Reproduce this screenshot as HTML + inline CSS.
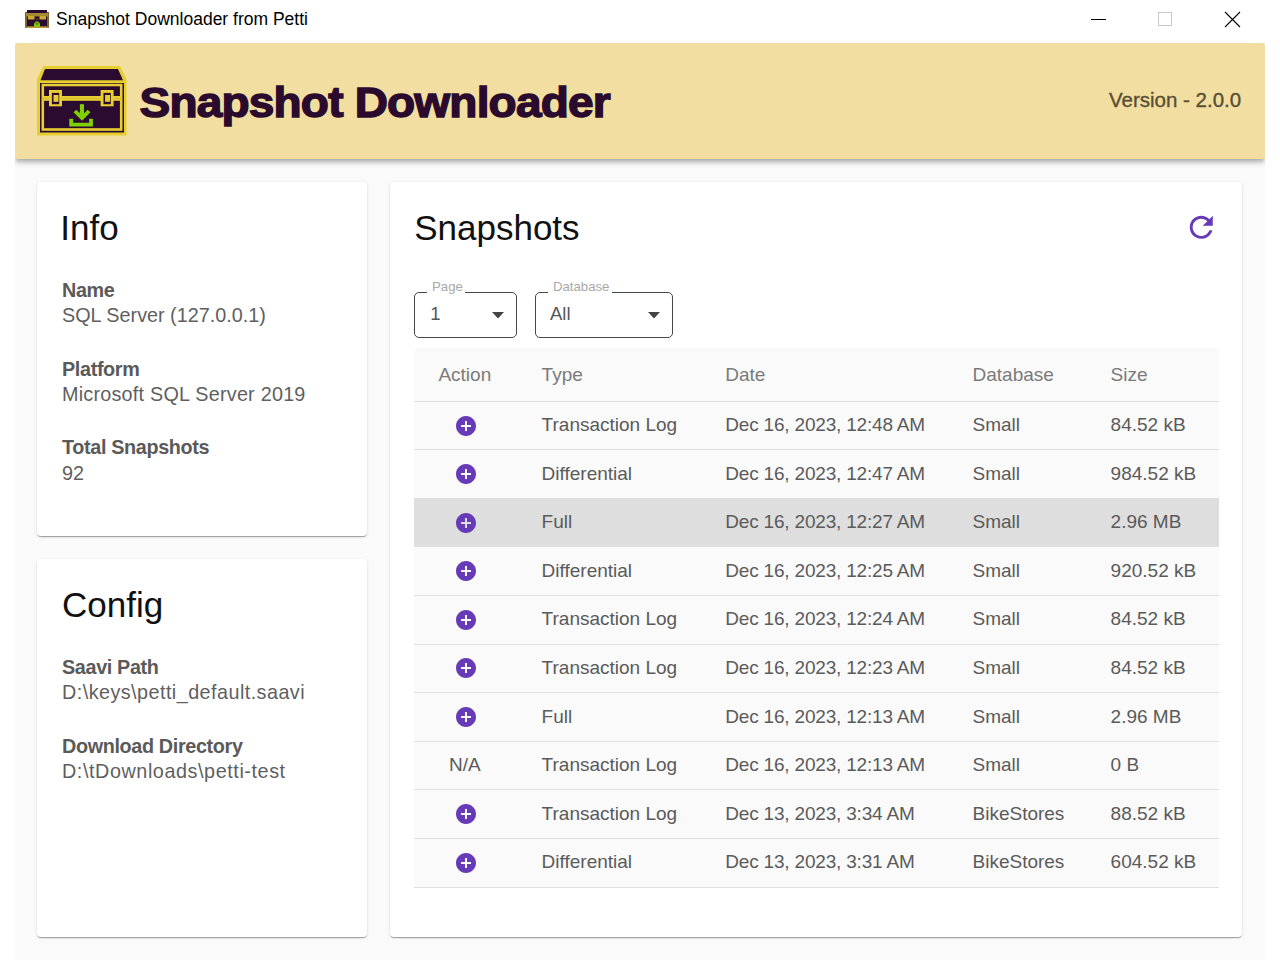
<!DOCTYPE html>
<html><head><meta charset="utf-8"><title>Snapshot Downloader</title><style>
*{margin:0;padding:0;box-sizing:border-box}
html,body{width:1280px;height:960px;overflow:hidden;background:#fff;font-family:"Liberation Sans",sans-serif}
.t{position:absolute;white-space:nowrap;line-height:1}
.abs{position:absolute}
</style></head><body>
<div class="abs" style="left:0;top:0;width:1280px;height:43px;background:#fff"></div>
<div class="t" style="left:56.00px;top:10.78px;font-size:17.5px;color:#000;font-weight:400;">Snapshot Downloader from Petti</div>
<div class="abs" style="left:1091px;top:19px;width:15px;height:1px;background:#000"></div>
<div class="abs" style="left:1158px;top:12px;width:14px;height:14px;border:1px solid #c8c8c8"></div>
<svg class="abs" style="left:1224px;top:11px" width="17" height="17" viewBox="0 0 17 17"><path d="M1 1L16 16M16 1L1 16" stroke="#000" stroke-width="1.1"/></svg>
<div class="abs" style="left:15px;top:43px;width:1250px;height:917px;background:#fafafa;overflow:hidden"><div class="abs" style="left:0;top:0;width:1250px;height:116px;background:#f2dea0;border-radius:3px 3px 0 0;box-shadow:0px 2px 4px -1px rgba(0,0,0,0.2),0px 4px 5px 0px rgba(0,0,0,0.14),0px 1px 10px 0px rgba(0,0,0,0.12)"></div></div>
<div class="t" style="left:139.50px;top:77.55px;font-size:46px;color:#2a0b2e;font-weight:700;letter-spacing:-0.8px;-webkit-text-stroke:1.5px #2a0b2e;transform:scaleY(0.93);transform-origin:0 38.95px">Snapshot Downloader</div>
<div class="t" style="left:1109.00px;top:89.84px;font-size:20.5px;color:#584f36;font-weight:400;-webkit-text-stroke:0.35px #584f36">Version - 2.0.0</div>
<div class="abs" style="left:37px;top:182px;width:330px;height:354px;background:#fff;border-radius:4px;box-shadow:0px 2px 1px -1px rgba(0,0,0,0.2),0px 1px 1px 0px rgba(0,0,0,0.14),0px 1px 3px 0px rgba(0,0,0,0.12)"></div>
<div class="abs" style="left:37px;top:559px;width:330px;height:378px;background:#fff;border-radius:4px;box-shadow:0px 2px 1px -1px rgba(0,0,0,0.2),0px 1px 1px 0px rgba(0,0,0,0.14),0px 1px 3px 0px rgba(0,0,0,0.12)"></div>
<div class="abs" style="left:390px;top:182px;width:852px;height:755px;background:#fff;border-radius:4px;box-shadow:0px 2px 1px -1px rgba(0,0,0,0.2),0px 1px 1px 0px rgba(0,0,0,0.14),0px 1px 3px 0px rgba(0,0,0,0.12)"></div>
<div class="t" style="left:60.30px;top:210.07px;font-size:35px;color:#111;font-weight:400;">Info</div>
<div class="t" style="left:62.00px;top:280.84px;font-size:19.8px;color:#5a5a5a;font-weight:700;letter-spacing:-0.35px">Name</div>
<div class="t" style="left:62.00px;top:306.04px;font-size:19.8px;color:#5f5f5f;font-weight:400;letter-spacing:0px">SQL Server (127.0.0.1)</div>
<div class="t" style="left:62.00px;top:360.14px;font-size:19.8px;color:#5a5a5a;font-weight:700;letter-spacing:-0.35px">Platform</div>
<div class="t" style="left:62.00px;top:385.34px;font-size:19.8px;color:#5f5f5f;font-weight:400;letter-spacing:0.23px">Microsoft SQL Server 2019</div>
<div class="t" style="left:62.00px;top:438.34px;font-size:19.8px;color:#5a5a5a;font-weight:700;letter-spacing:-0.35px">Total Snapshots</div>
<div class="t" style="left:62.00px;top:463.54px;font-size:19.8px;color:#5f5f5f;font-weight:400;letter-spacing:0px">92</div>
<div class="t" style="left:62.00px;top:587.07px;font-size:35px;color:#111;font-weight:400;">Config</div>
<div class="t" style="left:62.00px;top:657.84px;font-size:19.8px;color:#5a5a5a;font-weight:700;letter-spacing:-0.35px">Saavi Path</div>
<div class="t" style="left:62.00px;top:683.04px;font-size:19.8px;color:#5f5f5f;font-weight:400;letter-spacing:0.45px">D:\keys\petti_default.saavi</div>
<div class="t" style="left:62.00px;top:736.54px;font-size:19.8px;color:#5a5a5a;font-weight:700;letter-spacing:-0.35px">Download Directory</div>
<div class="t" style="left:62.00px;top:761.74px;font-size:19.8px;color:#5f5f5f;font-weight:400;letter-spacing:0.57px">D:\tDownloads\petti-test</div>
<div class="t" style="left:414.20px;top:210.17px;font-size:35px;color:#111;font-weight:400;">Snapshots</div>
<svg class="abs" style="left:1184.2px;top:209.7px" width="34.5" height="34.5" viewBox="0 0 24 24"><path fill="#673ab7" d="M17.65 6.35C16.2 4.9 14.21 4 12 4c-4.42 0-7.99 3.58-7.99 8s3.57 8 7.99 8c3.73 0 6.84-2.55 7.73-6h-2.08c-.82 2.33-3.04 4-5.65 4-3.31 0-6-2.69-6-6s2.69-6 6-6c1.66 0 3.14.69 4.22 1.78L13 11h7V4l-2.35 2.35z"/></svg>
<div class="abs" style="left:414.2px;top:292px;width:102.6px;height:46.4px;border:1.5px solid #474747;border-radius:5px"></div>
<div class="abs" style="left:427.3px;top:288px;width:38.0px;height:8px;background:#fff"></div>
<div class="t" style="left:432.00px;top:280.22px;font-size:13.2px;color:#a8a8a8;font-weight:400;">Page</div>
<div class="t" style="left:430.20px;top:305.24px;font-size:18.5px;color:#555;font-weight:400;">1</div>
<svg class="abs" style="left:492px;top:312px" width="12" height="6.5" viewBox="0 0 12 6.5"><path d="M0 0h12L6 6.5z" fill="#444"/></svg>
<div class="abs" style="left:535.3px;top:292px;width:137.4px;height:46.4px;border:1.5px solid #474747;border-radius:5px"></div>
<div class="abs" style="left:548px;top:288px;width:64px;height:8px;background:#fff"></div>
<div class="t" style="left:553.00px;top:280.22px;font-size:13.2px;color:#a8a8a8;font-weight:400;">Database</div>
<div class="t" style="left:550.00px;top:305.24px;font-size:18.5px;color:#555;font-weight:400;">All</div>
<svg class="abs" style="left:648px;top:312px" width="12" height="6.5" viewBox="0 0 12 6.5"><path d="M0 0h12L6 6.5z" fill="#444"/></svg>
<div class="abs" style="left:414px;top:347.5px;width:805px;height:539.5px;background:#fafafa;border-radius:4px 4px 0 0"></div>
<div class="t" style="left:438.40px;top:364.71px;font-size:19px;color:#7a7a7a;font-weight:400;">Action</div>
<div class="t" style="left:541.60px;top:364.71px;font-size:19px;color:#7a7a7a;font-weight:400;">Type</div>
<div class="t" style="left:725.30px;top:364.71px;font-size:19px;color:#7a7a7a;font-weight:400;">Date</div>
<div class="t" style="left:972.50px;top:364.71px;font-size:19px;color:#7a7a7a;font-weight:400;">Database</div>
<div class="t" style="left:1110.60px;top:364.71px;font-size:19px;color:#7a7a7a;font-weight:400;">Size</div>
<div class="abs" style="left:414px;top:400.7px;width:805px;height:1px;background:#e0e0e0"></div>
<div class="abs" style="left:414px;top:449.29px;width:805px;height:1px;background:#e0e0e0"></div>
<svg class="abs" style="left:453.6px;top:413.50px" width="24" height="24" viewBox="0 0 24 24"><path fill="#673ab7" d="M12 2C6.48 2 2 6.48 2 12s4.48 10 10 10 10-4.48 10-10S17.52 2 12 2zm5 11h-4v4h-2v-4H7v-2h4V7h2v4h4v2z"/></svg>
<div class="t" style="left:541.60px;top:415.01px;font-size:19px;color:#5a5a5a;font-weight:400;">Transaction Log</div>
<div class="t" style="left:725.30px;top:415.01px;font-size:19px;color:#5a5a5a;font-weight:400;letter-spacing:-0.19px">Dec 16, 2023, 12:48 AM</div>
<div class="t" style="left:972.50px;top:415.01px;font-size:19px;color:#5a5a5a;font-weight:400;">Small</div>
<div class="t" style="left:1110.60px;top:415.01px;font-size:19px;color:#5a5a5a;font-weight:400;">84.52 kB</div>
<div class="abs" style="left:414px;top:497.88px;width:805px;height:1px;background:#e0e0e0"></div>
<svg class="abs" style="left:453.6px;top:462.09px" width="24" height="24" viewBox="0 0 24 24"><path fill="#673ab7" d="M12 2C6.48 2 2 6.48 2 12s4.48 10 10 10 10-4.48 10-10S17.52 2 12 2zm5 11h-4v4h-2v-4H7v-2h4V7h2v4h4v2z"/></svg>
<div class="t" style="left:541.60px;top:463.60px;font-size:19px;color:#5a5a5a;font-weight:400;">Differential</div>
<div class="t" style="left:725.30px;top:463.60px;font-size:19px;color:#5a5a5a;font-weight:400;letter-spacing:-0.19px">Dec 16, 2023, 12:47 AM</div>
<div class="t" style="left:972.50px;top:463.60px;font-size:19px;color:#5a5a5a;font-weight:400;">Small</div>
<div class="t" style="left:1110.60px;top:463.60px;font-size:19px;color:#5a5a5a;font-weight:400;">984.52 kB</div>
<div class="abs" style="left:414px;top:497.98px;width:805px;height:48.59px;background:#dedede"></div>
<div class="abs" style="left:414px;top:546.47px;width:805px;height:1px;background:#e0e0e0"></div>
<svg class="abs" style="left:453.6px;top:510.68px" width="24" height="24" viewBox="0 0 24 24"><path fill="#673ab7" d="M12 2C6.48 2 2 6.48 2 12s4.48 10 10 10 10-4.48 10-10S17.52 2 12 2zm5 11h-4v4h-2v-4H7v-2h4V7h2v4h4v2z"/></svg>
<div class="t" style="left:541.60px;top:512.19px;font-size:19px;color:#5a5a5a;font-weight:400;">Full</div>
<div class="t" style="left:725.30px;top:512.19px;font-size:19px;color:#5a5a5a;font-weight:400;letter-spacing:-0.19px">Dec 16, 2023, 12:27 AM</div>
<div class="t" style="left:972.50px;top:512.19px;font-size:19px;color:#5a5a5a;font-weight:400;">Small</div>
<div class="t" style="left:1110.60px;top:512.19px;font-size:19px;color:#5a5a5a;font-weight:400;">2.96 MB</div>
<div class="abs" style="left:414px;top:595.06px;width:805px;height:1px;background:#e0e0e0"></div>
<svg class="abs" style="left:453.6px;top:559.27px" width="24" height="24" viewBox="0 0 24 24"><path fill="#673ab7" d="M12 2C6.48 2 2 6.48 2 12s4.48 10 10 10 10-4.48 10-10S17.52 2 12 2zm5 11h-4v4h-2v-4H7v-2h4V7h2v4h4v2z"/></svg>
<div class="t" style="left:541.60px;top:560.78px;font-size:19px;color:#5a5a5a;font-weight:400;">Differential</div>
<div class="t" style="left:725.30px;top:560.78px;font-size:19px;color:#5a5a5a;font-weight:400;letter-spacing:-0.19px">Dec 16, 2023, 12:25 AM</div>
<div class="t" style="left:972.50px;top:560.78px;font-size:19px;color:#5a5a5a;font-weight:400;">Small</div>
<div class="t" style="left:1110.60px;top:560.78px;font-size:19px;color:#5a5a5a;font-weight:400;">920.52 kB</div>
<div class="abs" style="left:414px;top:643.65px;width:805px;height:1px;background:#e0e0e0"></div>
<svg class="abs" style="left:453.6px;top:607.86px" width="24" height="24" viewBox="0 0 24 24"><path fill="#673ab7" d="M12 2C6.48 2 2 6.48 2 12s4.48 10 10 10 10-4.48 10-10S17.52 2 12 2zm5 11h-4v4h-2v-4H7v-2h4V7h2v4h4v2z"/></svg>
<div class="t" style="left:541.60px;top:609.37px;font-size:19px;color:#5a5a5a;font-weight:400;">Transaction Log</div>
<div class="t" style="left:725.30px;top:609.37px;font-size:19px;color:#5a5a5a;font-weight:400;letter-spacing:-0.19px">Dec 16, 2023, 12:24 AM</div>
<div class="t" style="left:972.50px;top:609.37px;font-size:19px;color:#5a5a5a;font-weight:400;">Small</div>
<div class="t" style="left:1110.60px;top:609.37px;font-size:19px;color:#5a5a5a;font-weight:400;">84.52 kB</div>
<div class="abs" style="left:414px;top:692.24px;width:805px;height:1px;background:#e0e0e0"></div>
<svg class="abs" style="left:453.6px;top:656.45px" width="24" height="24" viewBox="0 0 24 24"><path fill="#673ab7" d="M12 2C6.48 2 2 6.48 2 12s4.48 10 10 10 10-4.48 10-10S17.52 2 12 2zm5 11h-4v4h-2v-4H7v-2h4V7h2v4h4v2z"/></svg>
<div class="t" style="left:541.60px;top:657.96px;font-size:19px;color:#5a5a5a;font-weight:400;">Transaction Log</div>
<div class="t" style="left:725.30px;top:657.96px;font-size:19px;color:#5a5a5a;font-weight:400;letter-spacing:-0.19px">Dec 16, 2023, 12:23 AM</div>
<div class="t" style="left:972.50px;top:657.96px;font-size:19px;color:#5a5a5a;font-weight:400;">Small</div>
<div class="t" style="left:1110.60px;top:657.96px;font-size:19px;color:#5a5a5a;font-weight:400;">84.52 kB</div>
<div class="abs" style="left:414px;top:740.83px;width:805px;height:1px;background:#e0e0e0"></div>
<svg class="abs" style="left:453.6px;top:705.04px" width="24" height="24" viewBox="0 0 24 24"><path fill="#673ab7" d="M12 2C6.48 2 2 6.48 2 12s4.48 10 10 10 10-4.48 10-10S17.52 2 12 2zm5 11h-4v4h-2v-4H7v-2h4V7h2v4h4v2z"/></svg>
<div class="t" style="left:541.60px;top:706.55px;font-size:19px;color:#5a5a5a;font-weight:400;">Full</div>
<div class="t" style="left:725.30px;top:706.55px;font-size:19px;color:#5a5a5a;font-weight:400;letter-spacing:-0.19px">Dec 16, 2023, 12:13 AM</div>
<div class="t" style="left:972.50px;top:706.55px;font-size:19px;color:#5a5a5a;font-weight:400;">Small</div>
<div class="t" style="left:1110.60px;top:706.55px;font-size:19px;color:#5a5a5a;font-weight:400;">2.96 MB</div>
<div class="abs" style="left:414px;top:789.42px;width:805px;height:1px;background:#e0e0e0"></div>
<div class="t" style="left:449.00px;top:755.14px;font-size:19px;color:#5a5a5a;font-weight:400;">N/A</div>
<div class="t" style="left:541.60px;top:755.14px;font-size:19px;color:#5a5a5a;font-weight:400;">Transaction Log</div>
<div class="t" style="left:725.30px;top:755.14px;font-size:19px;color:#5a5a5a;font-weight:400;letter-spacing:-0.19px">Dec 16, 2023, 12:13 AM</div>
<div class="t" style="left:972.50px;top:755.14px;font-size:19px;color:#5a5a5a;font-weight:400;">Small</div>
<div class="t" style="left:1110.60px;top:755.14px;font-size:19px;color:#5a5a5a;font-weight:400;">0 B</div>
<div class="abs" style="left:414px;top:838.01px;width:805px;height:1px;background:#e0e0e0"></div>
<svg class="abs" style="left:453.6px;top:802.22px" width="24" height="24" viewBox="0 0 24 24"><path fill="#673ab7" d="M12 2C6.48 2 2 6.48 2 12s4.48 10 10 10 10-4.48 10-10S17.52 2 12 2zm5 11h-4v4h-2v-4H7v-2h4V7h2v4h4v2z"/></svg>
<div class="t" style="left:541.60px;top:803.73px;font-size:19px;color:#5a5a5a;font-weight:400;">Transaction Log</div>
<div class="t" style="left:725.30px;top:803.73px;font-size:19px;color:#5a5a5a;font-weight:400;letter-spacing:-0.19px">Dec 13, 2023, 3:34 AM</div>
<div class="t" style="left:972.50px;top:803.73px;font-size:19px;color:#5a5a5a;font-weight:400;">BikeStores</div>
<div class="t" style="left:1110.60px;top:803.73px;font-size:19px;color:#5a5a5a;font-weight:400;">88.52 kB</div>
<div class="abs" style="left:414px;top:886.60px;width:805px;height:1px;background:#e0e0e0"></div>
<svg class="abs" style="left:453.6px;top:850.81px" width="24" height="24" viewBox="0 0 24 24"><path fill="#673ab7" d="M12 2C6.48 2 2 6.48 2 12s4.48 10 10 10 10-4.48 10-10S17.52 2 12 2zm5 11h-4v4h-2v-4H7v-2h4V7h2v4h4v2z"/></svg>
<div class="t" style="left:541.60px;top:852.32px;font-size:19px;color:#5a5a5a;font-weight:400;">Differential</div>
<div class="t" style="left:725.30px;top:852.32px;font-size:19px;color:#5a5a5a;font-weight:400;letter-spacing:-0.19px">Dec 13, 2023, 3:31 AM</div>
<div class="t" style="left:972.50px;top:852.32px;font-size:19px;color:#5a5a5a;font-weight:400;">BikeStores</div>
<div class="t" style="left:1110.60px;top:852.32px;font-size:19px;color:#5a5a5a;font-weight:400;">604.52 kB</div>
<svg class="abs" style="left:34px;top:62px" width="96" height="78" viewBox="0 0 96 78">
<path fill="#e6cd30" d="M9.5 4 L86 4 L92.5 17 L92.5 73.5 L3 73.5 L3 17 Z"/>
<path fill="#2b0b2f" d="M11 7 L84 7 L89 18.3 L6.5 18.3 Z"/>
<rect fill="#2b0b2f" x="6" y="21" width="84" height="49.5"/>
<rect fill="none" stroke="#e6cd30" stroke-width="2.6" x="8.8" y="23" width="78.4" height="12.3"/>
<rect fill="none" stroke="#e6cd30" stroke-width="2.6" x="8.8" y="37.5" width="78.4" height="30"/>
<rect fill="#e6cd30" x="15" y="28" width="13" height="16.3"/>
<rect fill="#2b0b2f" x="17.9" y="30.9" width="7.3" height="11.3"/>
<rect fill="#e6cd30" x="19.5" y="33" width="5" height="6.8"/>
<rect fill="#e6cd30" x="66.6" y="28" width="13" height="16.3"/>
<rect fill="#2b0b2f" x="69.5" y="30.9" width="7.3" height="11.3"/>
<rect fill="#e6cd30" x="71.1" y="33" width="5" height="6.8"/>
<rect fill="#7fd000" x="45.9" y="42.2" width="4.1" height="13"/>
<path fill="#7fd000" d="M39.5 50.3 L42.3 47.8 L48 53.2 L53.7 47.8 L56.5 50.3 L48 58.8 Z"/>
<path fill="none" stroke="#7fd000" stroke-width="3.8" d="M37.2 56.8 V62.7 H57 V56.8"/>
</svg>
<svg class="abs" style="left:25px;top:10px" width="24" height="18" viewBox="0 0 24 18">
<rect fill="#7a6530" x="0" y="2" width="24" height="15.8"/>
<rect fill="#2b0b2f" x="2" y="0" width="20" height="3"/>
<rect fill="#a48b32" x="1" y="3" width="22" height="3.5"/>
<rect fill="#2b0b2f" x="2" y="6.5" width="20" height="10"/>
<rect fill="#c9ad30" x="3" y="6" width="6.5" height="3.5"/>
<rect fill="#c9ad30" x="14.5" y="6" width="6.5" height="3.5"/>
<rect fill="#6a5a2a" x="10.5" y="8.6" width="3" height="0.9"/>
<rect fill="#c8a428" x="2" y="16.5" width="20" height="1.3"/>
<rect fill="#7fd000" x="9" y="13.2" width="6" height="3.6"/>
<rect fill="#7fd000" x="10.2" y="11.6" width="3.6" height="1.8"/>
<rect fill="#2b0b2f" x="11" y="13.6" width="2" height="0.8"/>
</svg>
</body></html>
